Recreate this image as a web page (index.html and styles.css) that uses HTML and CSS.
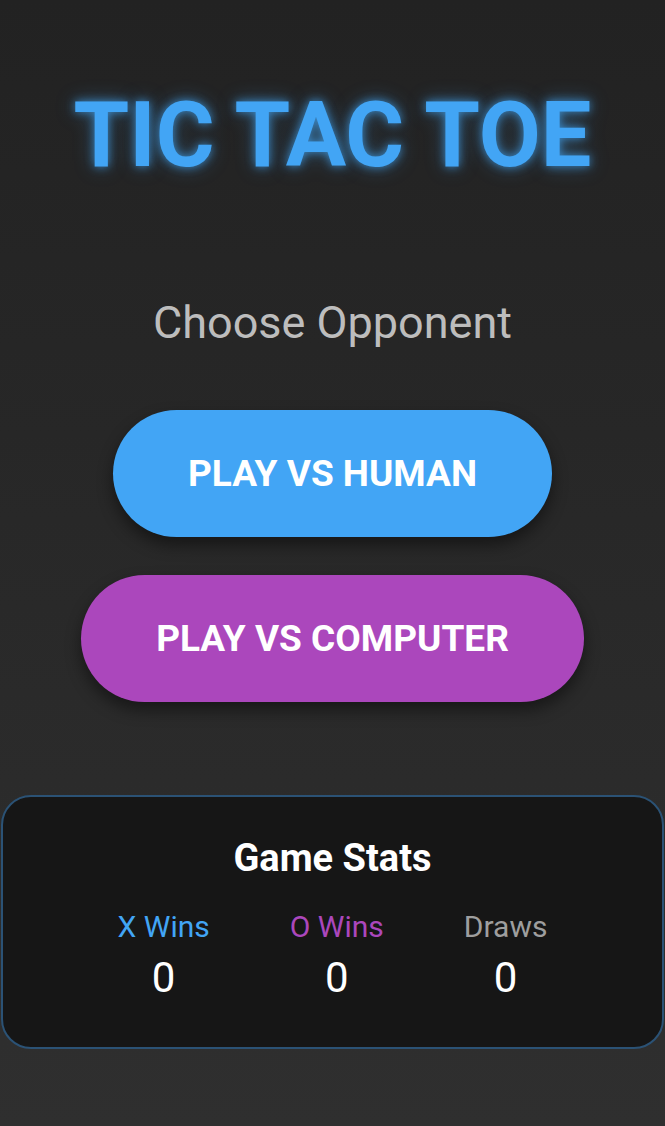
FILE: index.html
```html
<!DOCTYPE html>
<html lang="en">
  <head>
    <meta charset="utf-8">
    <meta name="viewport" content="width=device-width, initial-scale=1">
    <title>Tic Tac Toe</title>
    <link rel="stylesheet" href="styles.css">
  </head>

  <body>
    <main class="menu">
      <h1 class="title">TIC TAC TOE</h1>

      <p class="subtitle">Choose Opponent</p>

      <div class="mode-buttons">
        <button class="mode-btn mode-human" type="button">PLAY VS HUMAN</button>
        <button class="mode-btn mode-computer" type="button">PLAY VS COMPUTER</button>
      </div>

      <section class="stats">
        <h2 class="stats-title">Game Stats</h2>
        <div class="stats-row">
          <div class="stat">
            <span class="stat-label stat-x">X Wins</span>
            <span class="stat-value" id="x-wins">0</span>
          </div>
          <div class="stat">
            <span class="stat-label stat-o">O Wins</span>
            <span class="stat-value" id="o-wins">0</span>
          </div>
          <div class="stat">
            <span class="stat-label stat-draw">Draws</span>
            <span class="stat-value" id="draws">0</span>
          </div>
        </div>
      </section>
    </main>
  </body>
</html>
```

FILE: styles.css
```css
html,
body {
  margin: 0;
  padding: 0;
}

body {
  min-height: 100vh;
  background: linear-gradient(to bottom, #222222, #2f2f2f);
  font-family: Roboto, "Noto Sans", sans-serif;
  color: white;
}

.menu {
  display: flex;
  flex-direction: column;
  align-items: center;
  padding: 1px 1px 0 1px;
}

.title {
  margin: 90px 0 0 0;
  font-size: 90px;
  font-weight: 700;
  line-height: 1;
  color: #42a5f5;
  text-shadow: 0 0 10px rgba(66, 165, 245, 0.75),
               0 0 20px rgba(66, 165, 245, 0.35);
}

.subtitle {
  margin: 119px 0 0 0;
  font-size: 45px;
  line-height: 1;
  color: #bdbdbd;
}

.mode-buttons {
  display: flex;
  flex-direction: column;
  align-items: center;
  gap: 38px;
  margin-top: 65px;
}

.mode-btn {
  height: 127px;
  padding: 0 75px;
  border: none;
  border-radius: 64px;
  font-family: inherit;
  font-size: 37px;
  font-weight: 700;
  color: white;
  box-shadow: 0 8px 16px rgba(0, 0, 0, 0.45);
  cursor: pointer;
}

.mode-human {
  background-color: #42a5f5;
}

.mode-computer {
  background-color: #ab47bc;
}

.stats {
  align-self: stretch;
  margin-top: 93px;
  padding: 39px 0 44px 0;
  background-color: #161616;
  border: 2px solid #2b5275;
  border-radius: 30px;
  text-align: center;
}

.stats-title {
  margin: 0;
  font-size: 38px;
  font-weight: 700;
  line-height: 1.2;
}

.stats-row {
  display: flex;
  justify-content: center;
  gap: 80px;
  margin-top: 27px;
}

.stat {
  display: flex;
  flex-direction: column;
  align-items: center;
}

.stat-label {
  font-size: 30px;
  line-height: 1.2;
}

.stat-x {
  color: #42a5f5;
}

.stat-o {
  color: #ab47bc;
}

.stat-draw {
  color: #9e9e9e;
}

.stat-value {
  font-size: 42px;
  line-height: 1.2;
  margin-top: 8px;
}
```
